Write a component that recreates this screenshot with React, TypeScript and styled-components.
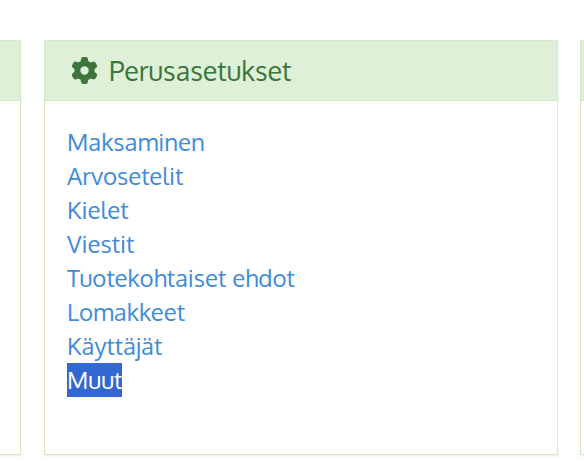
import React from "react";
import styled, { createGlobalStyle } from "styled-components";
import { FaGear } from "react-icons/fa6";

const GlobalStyle = createGlobalStyle`
  *, *::before, *::after { box-sizing: border-box; }
  body {
    margin: 0;
    background: #fff;
    font-family: Oxygen, "Noto Sans", "Open Sans", sans-serif;
    font-size: 24px;
    line-height: 34px;
  }
`;

const Page = styled.main`
  display: grid;
  grid-template-columns: 22px minmax(0, 1fr) 4px;
  column-gap: 22px;
  padding-top: 40px;
  overflow: hidden;
`;

const Panel = styled.section<{ $side?: "start" | "end" }>`
  display: flex;
  flex-direction: column;
  border: 1px solid #d6e9c6;
  border-left-width: ${(p) => (p.$side === "start" ? 0 : "1px")};
  border-right-width: ${(p) => (p.$side === "end" ? 0 : "1px")};
  background: #fff;
  box-shadow: 0 2px 2px rgba(0, 0, 0, 0.05);
  margin-right: ${(p) => (p.$side === "start" ? "1px" : 0)};
  margin-bottom: 7px;
`;

const PanelHeader = styled.header`
  display: flex;
  align-items: center;
  gap: 11px;
  height: 60px;
  padding: 0 26px;
  background: #dff0d8;
  border-bottom: 1px solid #d6e9c6;
  color: #3c763d;
`;

const EdgeHeader = styled.div`
  height: 60px;
  background: #dff0d8;
  border-bottom: 1px solid #d6e9c6;
`;

const Title = styled.h2`
  margin: 0;
  padding-bottom: 2px;
  font-size: 27px;
  font-weight: 400;
  line-height: 34px;
`;

const LinkList = styled.ul`
  margin: 0;
  padding: 24px 22px 57px;
  list-style: none;
`;

const Item = styled.li`
  display: flex;
`;

const SettingsLink = styled.a<{ $selected?: boolean }>`
  color: ${(p) => (p.$selected ? "#fff" : "#428bda")};
  background: ${(p) => (p.$selected ? "#3367d1" : "transparent")};
  text-decoration: none;
`;

const links = [
  "Maksaminen",
  "Arvosetelit",
  "Kielet",
  "Viestit",
  "Tuotekohtaiset ehdot",
  "Lomakkeet",
  "Käyttäjät",
  "Muut",
];

export default function App() {
  return (
    <>
      <GlobalStyle />
      <Page>
        <Panel $side="start">
          <EdgeHeader />
        </Panel>
        <Panel>
          <PanelHeader>
            <FaGear size={27} aria-hidden />
            <Title>Perusasetukset</Title>
          </PanelHeader>
          <LinkList>
            {links.map((label) => (
              <Item key={label}>
                <SettingsLink href="#" $selected={label === "Muut"}>
                  {label}
                </SettingsLink>
              </Item>
            ))}
          </LinkList>
        </Panel>
        <Panel $side="end">
          <EdgeHeader />
        </Panel>
      </Page>
    </>
  );
}
